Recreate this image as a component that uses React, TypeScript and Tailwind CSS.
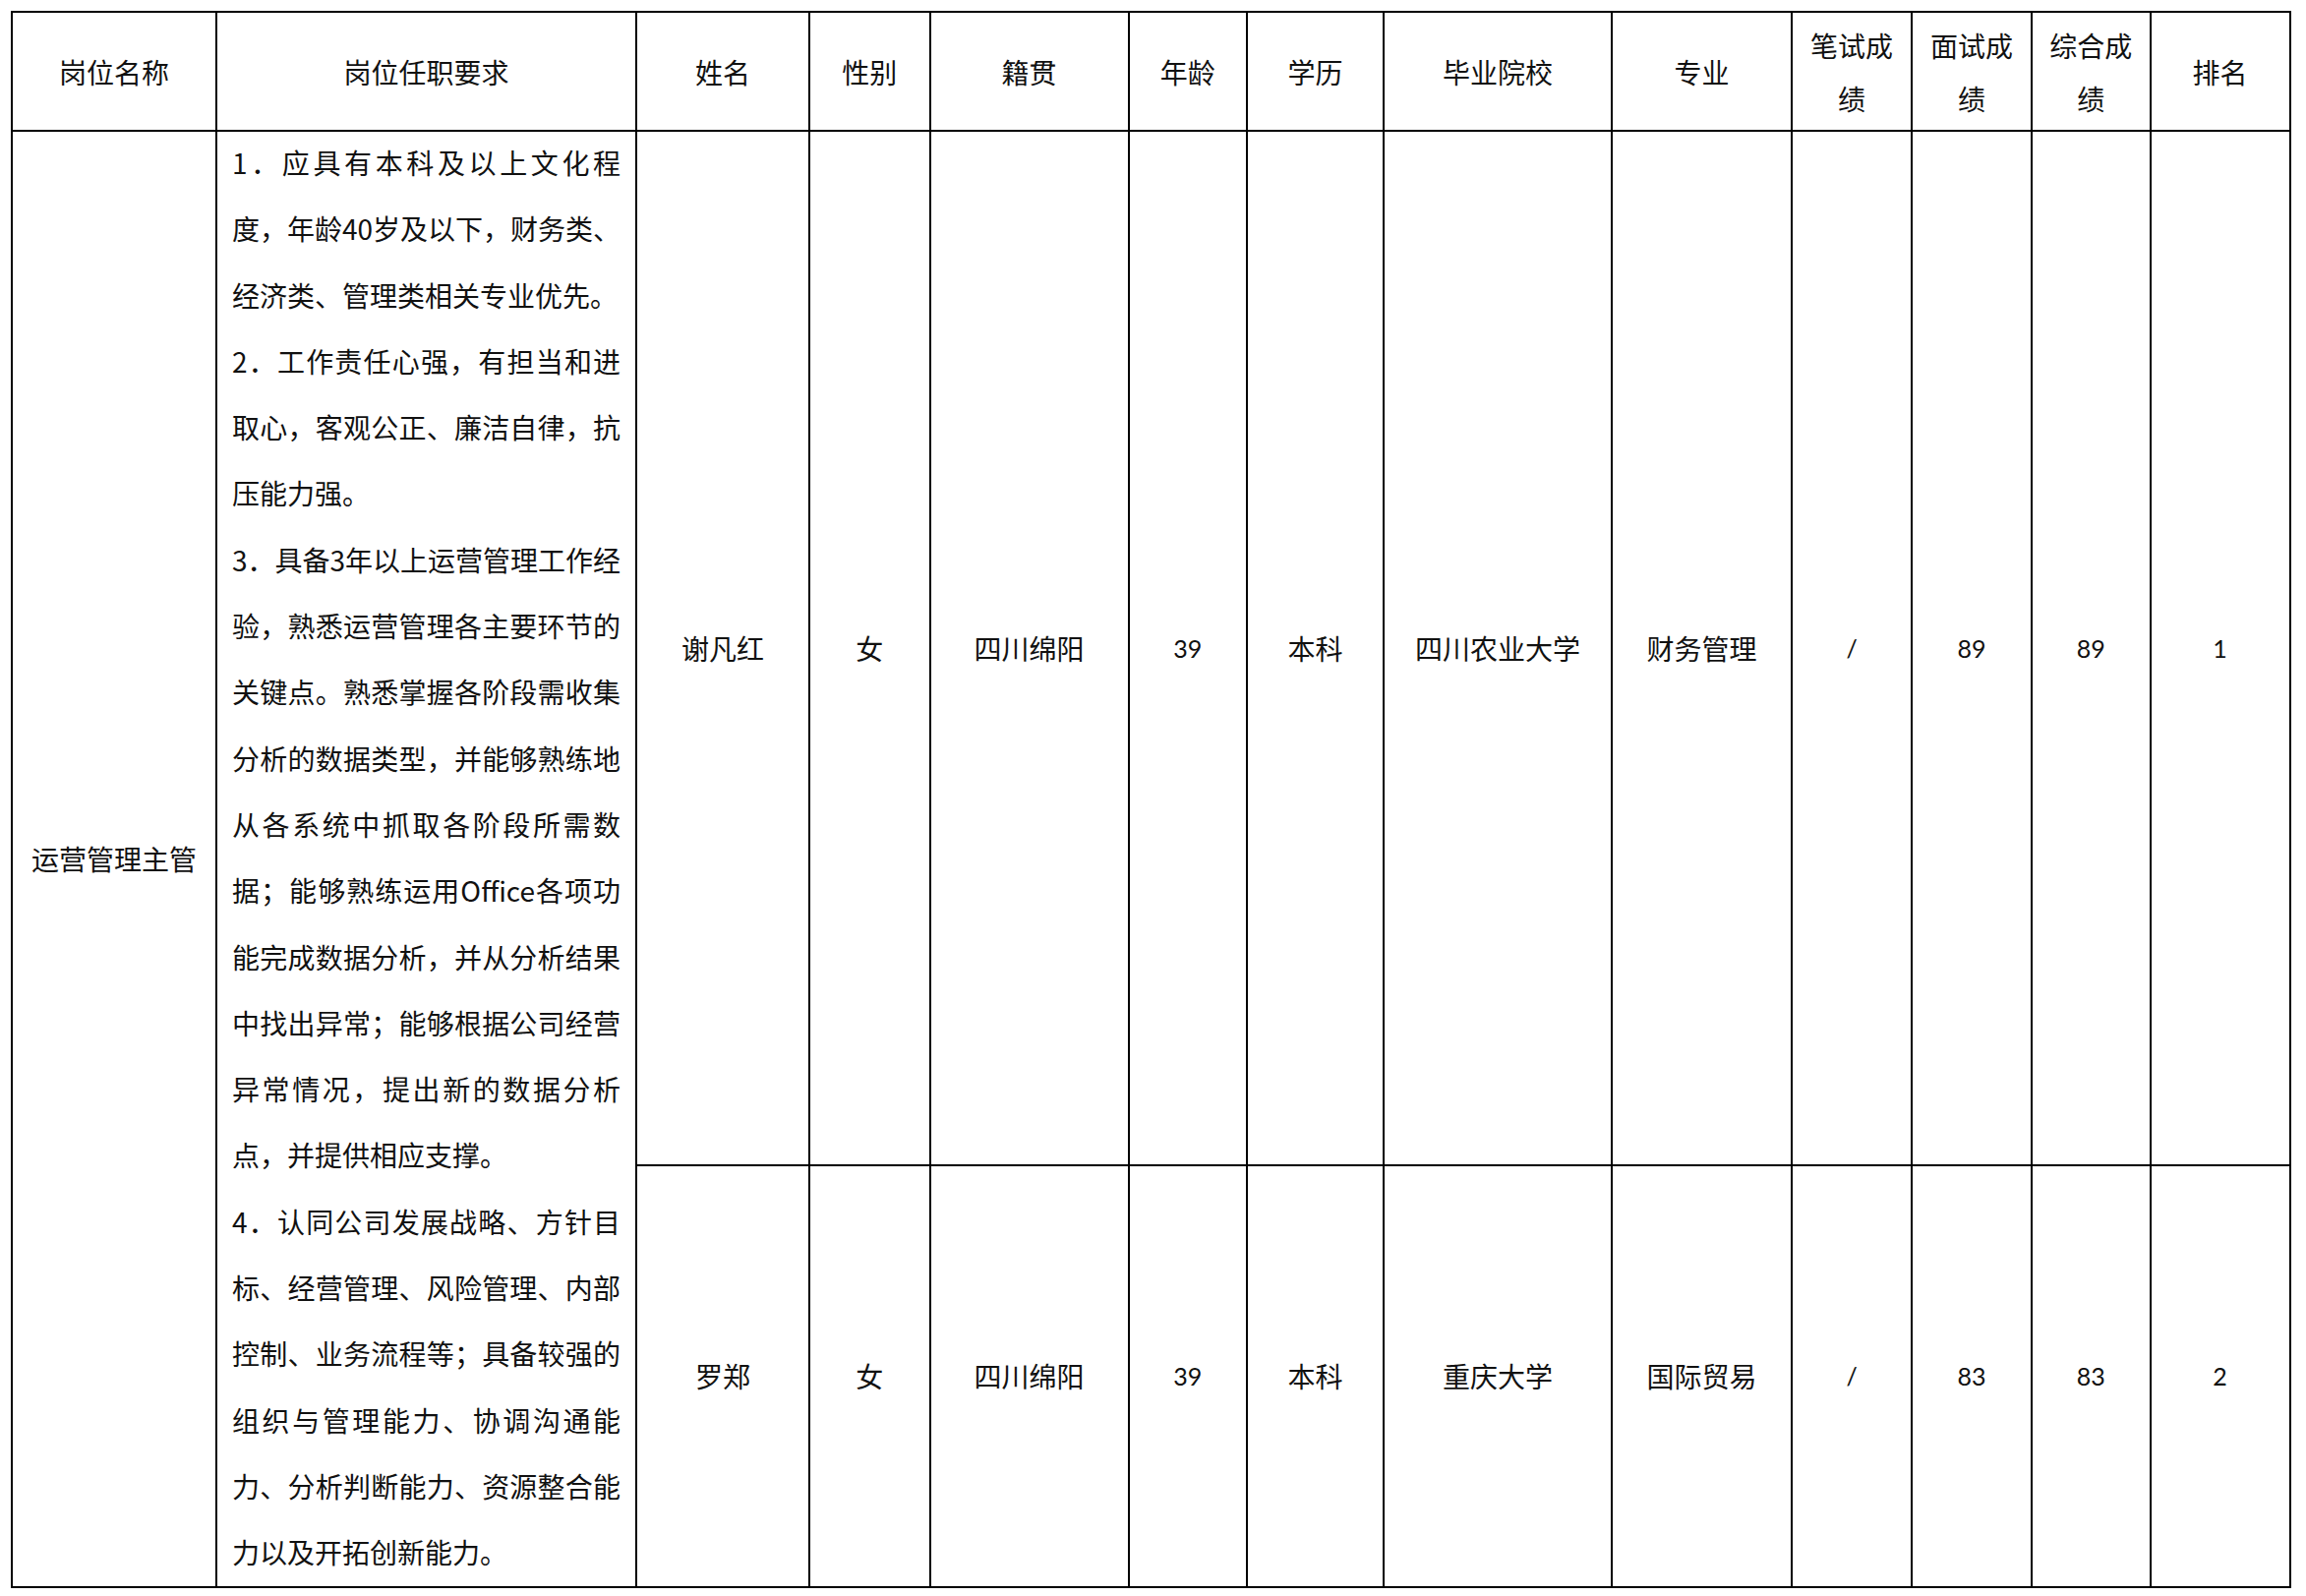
const cjk = "font-['Noto_Sans_CJK_SC','Noto_Sans_CJK_JP',sans-serif]";
const num = "font-['Lato','Liberation_Sans',sans-serif]";

type Header = { key: string; lines: string[] };

const headers: Header[] = [
  { key: "name", lines: ["岗位名称"] },
  { key: "req", lines: ["岗位任职要求"] },
  { key: "person", lines: ["姓名"] },
  { key: "sex", lines: ["性别"] },
  { key: "origin", lines: ["籍贯"] },
  { key: "age", lines: ["年龄"] },
  { key: "edu", lines: ["学历"] },
  { key: "school", lines: ["毕业院校"] },
  { key: "major", lines: ["专业"] },
  { key: "written", lines: ["笔试成", "绩"] },
  { key: "interview", lines: ["面试成", "绩"] },
  { key: "total", lines: ["综合成", "绩"] },
  { key: "rank", lines: ["排名"] },
];

// each visual line of the requirement cell; false = last line of a paragraph
const reqLines: [string, boolean][] = [
  ["1．应具有本科及以上文化程", true],
  ["度，年龄40岁及以下，财务类、", true],
  ["经济类、管理类相关专业优先。", false],
  ["2．工作责任心强，有担当和进", true],
  ["取心，客观公正、廉洁自律，抗", true],
  ["压能力强。", false],
  ["3．具备3年以上运营管理工作经", true],
  ["验，熟悉运营管理各主要环节的", true],
  ["关键点。熟悉掌握各阶段需收集", true],
  ["分析的数据类型，并能够熟练地", true],
  ["从各系统中抓取各阶段所需数", true],
  ["据；能够熟练运用Office各项功", true],
  ["能完成数据分析，并从分析结果", true],
  ["中找出异常；能够根据公司经营", true],
  ["异常情况，提出新的数据分析", true],
  ["点，并提供相应支撑。", false],
  ["4．认同公司发展战略、方针目", true],
  ["标、经营管理、风险管理、内部", true],
  ["控制、业务流程等；具备较强的", true],
  ["组织与管理能力、协调沟通能", true],
  ["力、分析判断能力、资源整合能", true],
  ["力以及开拓创新能力。", false],
];

type Person = {
  name: string;
  sex: string;
  origin: string;
  age: string;
  edu: string;
  school: string;
  major: string;
  written: string;
  interview: string;
  total: string;
  rank: string;
};

const people: Person[] = [
  {
    name: "谢凡红",
    sex: "女",
    origin: "四川绵阳",
    age: "39",
    edu: "本科",
    school: "四川农业大学",
    major: "财务管理",
    written: "/",
    interview: "89",
    total: "89",
    rank: "1",
  },
  {
    name: "罗郑",
    sex: "女",
    origin: "四川绵阳",
    age: "39",
    edu: "本科",
    school: "重庆大学",
    major: "国际贸易",
    written: "/",
    interview: "83",
    total: "83",
    rank: "2",
  },
];

const cell = "border-2 border-black text-center align-middle p-0";

const TextCell = ({ children }: { children: string }) => (
  <td className={`${cell} ${cjk} text-[28px] leading-[40px] text-[#111]`}>{children}</td>
);

const NumCell = ({ children }: { children: string }) => (
  <td className={`${cell} ${num} text-[25px] leading-[40px] text-[#111]`}>{children}</td>
);

const PersonCells = ({ p }: { p: Person }) => (
  <>
    <TextCell>{p.name}</TextCell>
    <TextCell>{p.sex}</TextCell>
    <TextCell>{p.origin}</TextCell>
    <NumCell>{p.age}</NumCell>
    <TextCell>{p.edu}</TextCell>
    <TextCell>{p.school}</TextCell>
    <TextCell>{p.major}</TextCell>
    <NumCell>{p.written}</NumCell>
    <NumCell>{p.interview}</NumCell>
    <NumCell>{p.total}</NumCell>
    <NumCell>{p.rank}</NumCell>
  </>
);

export default function App() {
  return (
    <div className="min-h-screen w-full bg-white pt-[11px] pl-[11px]">
      <table className="table-fixed border-collapse border-2 border-black">
        <colgroup>
          <col className="w-[208px]" />
          <col className="w-[427px]" />
          <col className="w-[176px]" />
          <col className="w-[122.5px]" />
          <col className="w-[202px]" />
          <col className="w-[120.5px]" />
          <col className="w-[139px]" />
          <col className="w-[232px]" />
          <col className="w-[183px]" />
          <col className="w-[122px]" />
          <col className="w-[122px]" />
          <col className="w-[120.5px]" />
          <col className="w-[142px]" />
        </colgroup>
        <thead>
          <tr className="h-[121px]">
            {headers.map((h) => (
              <th
                key={h.key}
                className={`${cell} ${cjk} text-[28px] font-normal leading-[54px] text-[#111]`}
              >
                {h.lines.map((l) => (
                  <div key={l}>{l}</div>
                ))}
              </th>
            ))}
          </tr>
        </thead>
        <tbody>
          <tr className="h-[1052px]">
            <td rowSpan={2} className={`${cell} ${cjk} text-[28px] text-[#111]`}>
              运营管理主管
            </td>
            <td rowSpan={2} className={`${cell} px-[15px] text-left`}>
              <div className={`${cjk} -mt-[2px] text-[28px] leading-[67.3px] text-[#111]`}>
                {reqLines.map(([line, full], i) => (
                  <div
                    key={i}
                    className={
                      full
                        ? "whitespace-nowrap text-justify [text-align-last:justify]"
                        : "whitespace-nowrap text-left"
                    }
                  >
                    {line}
                  </div>
                ))}
              </div>
            </td>
            <PersonCells p={people[0]} />
          </tr>
          <tr className="h-[428px]">
            <PersonCells p={people[1]} />
          </tr>
        </tbody>
      </table>
    </div>
  );
}
